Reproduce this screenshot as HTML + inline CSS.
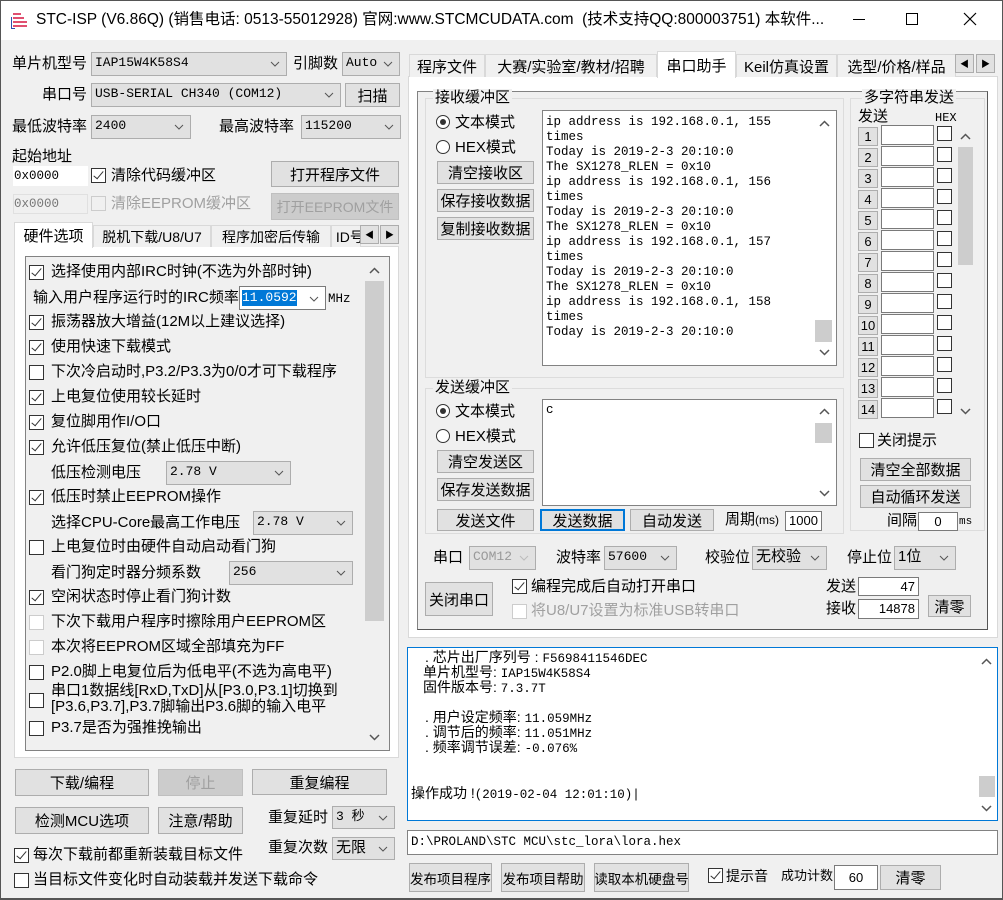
<!DOCTYPE html><html><head><meta charset="utf-8"><style>
*{box-sizing:border-box;margin:0;padding:0}
body{width:1003px;height:900px;background:#f0f0f0;position:relative;overflow:hidden;font-family:"Liberation Sans","Noto Sans CJK SC",sans-serif;font-size:14px;color:#000}
.a{position:absolute;white-space:nowrap}
.t{position:absolute;white-space:nowrap;line-height:18px;height:18px}
.b{position:absolute;background:#e1e1e1;border:1px solid #adadad;display:flex;align-items:center;justify-content:center;white-space:nowrap}
.d{color:#a0a0a0;background:#ccc;border-color:#bfbfbf}
.c{position:absolute;background:#e1e1e1;border:1px solid #adadad;padding-left:3px;line-height:20px;white-space:nowrap;font-family:"Liberation Mono","Noto Sans CJK SC",monospace;font-size:13px}
.c svg{position:absolute;right:6px;top:8px}
.e{position:absolute;background:#fff;border:1px solid #7a7a7a;white-space:nowrap}
.k{position:absolute;width:15px;height:15px;border:1px solid #333;background:#fff}
.k.x::after{content:"";position:absolute;left:4px;top:0px;width:4px;height:9px;border:solid #333;border-width:0 1.5px 1.5px 0;transform:rotate(40deg)}
.kd{border-color:#ccc}
.r{position:absolute;width:14px;height:14px;border:1px solid #333;border-radius:50%;background:#fff}
.r.x::after{content:"";position:absolute;left:3px;top:3px;width:6px;height:6px;border-radius:50%;background:#333}
.tab{position:absolute;border:1px solid #d9d9d9;border-bottom:none;background:#f0f0f0;display:flex;align-items:center;justify-content:center;white-space:nowrap}
.g{position:absolute;border:1px solid #dcdcdc}
.gl{position:absolute;background:#f0f0f0;padding:0 2px;line-height:18px;white-space:nowrap}
.m{font-family:"Liberation Mono","Noto Sans CJK SC",monospace;font-size:12.5px}
.n{position:absolute;width:20px;height:19px;background:#e1e1e1;border:1px solid #adadad;text-align:center;line-height:18px;font-size:13px}
</style></head><body>
<!-- title bar -->
<div class="a" style="left:0;top:0;width:1003px;height:40px;background:#fff;border:1px solid #555;border-bottom:none"></div>
<svg class="a" style="left:11px;top:11px" width="20" height="18"><path d="M2 3h8M2 7h11M2 11h14M2 15h14" stroke="#e05070" stroke-width="2"/><path d="M0 6v12h4" stroke="#3050b0" stroke-width="2" fill="none"/></svg>
<div class="t" style="left:36px;top:10px;font-size:15.5px;line-height:20px">STC-ISP (V6.86Q) (销售电话: 0513-55012928) 官网:www.STCMCUDATA.com&nbsp; (技术支持QQ:800003751) 本软件...</div>
<div class="a" style="left:853px;top:19px;width:12px;height:1px;background:#000"></div>
<div class="a" style="left:906px;top:13px;width:12px;height:12px;border:1px solid #000"></div>
<svg class="a" style="left:963px;top:12px" width="14" height="14"><path d="M1 1l12 12M13 1L1 13" stroke="#000" stroke-width="1.2"/></svg>
<div class="a" style="left:0;top:40px;width:1px;height:860px;background:#555"></div>
<div class="a" style="left:1002px;top:40px;width:1px;height:860px;background:#555"></div>
<div class="a" style="left:0;top:898px;width:1003px;height:2px;background:#555"></div>

<!-- LEFT -->
<div class="t" style="left:12px;top:55px;font-size:15px">单片机型号</div>
<div class="c" style="left:91px;top:52px;width:196px;height:24px">IAP15W4K58S4<svg width="10" height="6"><path d="M1 1l4 4 4-4" stroke="#555" fill="none"/></svg></div>
<div class="t" style="left:293px;top:55px;font-size:15px">引脚数</div>
<div class="c" style="left:342px;top:52px;width:58px;height:24px">Auto<svg width="10" height="6"><path d="M1 1l4 4 4-4" stroke="#555" fill="none"/></svg></div>
<div class="t" style="left:42px;top:86px;font-size:15px">串口号</div>
<div class="c" style="left:91px;top:83px;width:250px;height:24px">USB-SERIAL CH340 (COM12)<svg width="10" height="6"><path d="M1 1l4 4 4-4" stroke="#555" fill="none"/></svg></div>
<div class="b" style="left:345px;top:83px;width:55px;height:24px;font-size:15px">扫描</div>
<div class="t" style="left:12px;top:118px;font-size:15px">最低波特率</div>
<div class="c" style="left:91px;top:115px;width:100px;height:24px">2400<svg width="10" height="6"><path d="M1 1l4 4 4-4" stroke="#555" fill="none"/></svg></div>
<div class="t" style="left:219px;top:118px;font-size:15px">最高波特率</div>
<div class="c" style="left:301px;top:115px;width:100px;height:24px">115200<svg width="10" height="6"><path d="M1 1l4 4 4-4" stroke="#555" fill="none"/></svg></div>
<div class="t" style="left:12px;top:148px;font-size:15px">起始地址</div>
<div class="e m" style="left:13px;top:166px;width:75px;height:20px;border:none;padding-left:1px;line-height:20px">0x0000</div>
<div class="k x" style="left:91px;top:168px"></div>
<div class="t" style="left:111px;top:167px;font-size:15px">清除代码缓冲区</div>
<div class="b" style="left:271px;top:161px;width:128px;height:26px;font-size:15px">打开程序文件</div>
<div class="a m" style="left:13px;top:194px;width:75px;height:20px;background:#f0f0f0;border:1px solid #e0e0e0;color:#777;line-height:18px">0x0000</div>
<div class="k kd" style="left:91px;top:196px;background:#f0f0f0"></div>
<div class="t" style="left:111px;top:195px;font-size:15px;color:#a0a0a0">清除EEPROM缓冲区</div>
<div class="b d" style="left:271px;top:193px;width:128px;height:27px;font-size:14px">打开EEPROM文件</div>
<!-- left tabs -->
<div class="a" style="left:14px;top:246px;width:385px;height:512px;background:#fff;border:1px solid #d9d9d9"></div>
<div class="tab" style="left:14px;top:222px;width:79px;height:26px;background:#fff;font-size:15px">硬件选项</div>
<div class="tab" style="left:93px;top:225px;width:118px;height:22px;font-size:14px">脱机下载/U8/U7</div>
<div class="tab" style="left:211px;top:225px;width:120px;height:22px;font-size:14px">程序加密后传输</div>
<div class="tab" style="left:331px;top:225px;width:30px;height:22px;justify-content:flex-start;overflow:hidden;font-size:14px">&nbsp;ID号</div>
<div class="b" style="left:360px;top:225px;width:19px;height:19px;font-size:9px">◀</div>
<div class="b" style="left:380px;top:225px;width:19px;height:19px;font-size:9px">▶</div>
<div class="a" style="left:25px;top:256px;width:365px;height:495px;background:#f0f0f0;border:1px solid #828282"></div>
<div class="a" style="left:365px;top:281px;width:19px;height:340px;background:#cdcdcd"></div>
<svg class="a" style="left:369px;top:267px" width="11" height="7"><path d="M1 6l4.5-4.5 4.5 4.5" stroke="#555" fill="none" stroke-width="1.5"/></svg>
<svg class="a" style="left:369px;top:734px" width="11" height="7"><path d="M1 1l4.5 4.5 4.5-4.5" stroke="#555" fill="none" stroke-width="1.5"/></svg>
<div class="k x" style="left:29px;top:265px"></div><div class="t" style="left:51px;top:263px;font-size:15px">选择使用内部IRC时钟(不选为外部时钟)</div>
<div class="t" style="left:33px;top:289px;font-size:15px">输入用户程序运行时的IRC频率</div>
<div class="e" style="left:239px;top:286px;width:87px;height:24px"><span class="m" style="position:absolute;left:2px;top:3px;background:#0078d7;color:#fff;font-size:13px;line-height:16px">11.0592</span><svg style="position:absolute;right:6px;top:9px" width="10" height="6"><path d="M1 1l4 4 4-4" stroke="#555" fill="none"/></svg></div>
<div class="t m" style="left:328px;top:290px">MHz</div>
<div class="k x" style="left:29px;top:315px"></div><div class="t" style="left:51px;top:313px;font-size:15px">振荡器放大增益(12M以上建议选择)</div>
<div class="k x" style="left:29px;top:340px"></div><div class="t" style="left:51px;top:338px;font-size:15px">使用快速下载模式</div>
<div class="k" style="left:29px;top:365px"></div><div class="t" style="left:51px;top:363px;font-size:15px">下次冷启动时,P3.2/P3.3为0/0才可下载程序</div>
<div class="k x" style="left:29px;top:390px"></div><div class="t" style="left:51px;top:388px;font-size:15px">上电复位使用较长延时</div>
<div class="k x" style="left:29px;top:415px"></div><div class="t" style="left:51px;top:413px;font-size:15px">复位脚用作I/O口</div>
<div class="k x" style="left:29px;top:440px"></div><div class="t" style="left:51px;top:438px;font-size:15px">允许低压复位(禁止低压中断)</div>
<div class="t" style="left:51px;top:464px;font-size:15px">低压检测电压</div>
<div class="c" style="left:166px;top:461px;width:125px;height:24px">2.78 V<svg width="10" height="6"><path d="M1 1l4 4 4-4" stroke="#555" fill="none"/></svg></div>
<div class="k x" style="left:29px;top:490px"></div><div class="t" style="left:51px;top:488px;font-size:15px">低压时禁止EEPROM操作</div>
<div class="t" style="left:51px;top:514px;font-size:15px">选择CPU-Core最高工作电压</div>
<div class="c" style="left:253px;top:511px;width:100px;height:24px">2.78 V<svg width="10" height="6"><path d="M1 1l4 4 4-4" stroke="#555" fill="none"/></svg></div>
<div class="k" style="left:29px;top:540px"></div><div class="t" style="left:51px;top:538px;font-size:15px">上电复位时由硬件自动启动看门狗</div>
<div class="t" style="left:51px;top:564px;font-size:15px">看门狗定时器分频系数</div>
<div class="c" style="left:229px;top:561px;width:124px;height:24px">256<svg width="10" height="6"><path d="M1 1l4 4 4-4" stroke="#555" fill="none"/></svg></div>
<div class="k x" style="left:29px;top:590px"></div><div class="t" style="left:51px;top:588px;font-size:15px">空闲状态时停止看门狗计数</div>
<div class="k kd" style="left:29px;top:615px"></div><div class="t" style="left:51px;top:613px;font-size:15px">下次下载用户程序时擦除用户EEPROM区</div>
<div class="k kd" style="left:29px;top:640px"></div><div class="t" style="left:51px;top:638px;font-size:15px">本次将EEPROM区域全部填充为FF</div>
<div class="k" style="left:29px;top:665px"></div><div class="t" style="left:51px;top:663px;font-size:15px">P2.0脚上电复位后为低电平(不选为高电平)</div>
<div class="k" style="left:29px;top:693px"></div><div class="t" style="left:51px;top:683px;font-size:15px;line-height:16px">串口1数据线[RxD,TxD]从[P3.0,P3.1]切换到</div><div class="t" style="left:51px;top:699px;font-size:15px;line-height:16px">[P3.6,P3.7],P3.7脚输出P3.6脚的输入电平</div>
<div class="k" style="left:29px;top:721px"></div><div class="t" style="left:51px;top:719px;font-size:15px">P3.7是否为强推挽输出</div>
<!-- left bottom -->
<div class="b" style="left:15px;top:769px;width:134px;height:27px;font-size:15px">下载/编程</div>
<div class="b d" style="left:158px;top:769px;width:85px;height:27px;font-size:15px">停止</div>
<div class="b" style="left:252px;top:769px;width:135px;height:26px;font-size:15px">重复编程</div>
<div class="b" style="left:15px;top:807px;width:134px;height:27px;font-size:15px">检测MCU选项</div>
<div class="b" style="left:158px;top:807px;width:85px;height:27px;font-size:15px">注意/帮助</div>
<div class="t" style="left:268px;top:809px;font-size:15px">重复延时</div>
<div class="c" style="left:332px;top:806px;width:63px;height:23px">3 秒<svg width="10" height="6"><path d="M1 1l4 4 4-4" stroke="#555" fill="none"/></svg></div>
<div class="t" style="left:268px;top:839px;font-size:15px">重复次数</div>
<div class="c" style="left:332px;top:837px;width:63px;height:23px;font-family:'Liberation Sans','Noto Sans CJK SC',sans-serif;font-size:15px">无限<svg width="10" height="6"><path d="M1 1l4 4 4-4" stroke="#555" fill="none"/></svg></div>
<div class="k x" style="left:14px;top:848px"></div><div class="t" style="left:33px;top:846px;font-size:15px">每次下载前都重新装载目标文件</div>
<div class="k" style="left:14px;top:873px"></div><div class="t" style="left:33px;top:871px;font-size:15px">当目标文件变化时自动装载并发送下载命令</div>

<!-- RIGHT -->
<div class="a" style="left:408px;top:76px;width:590px;height:562px;background:#fff;border:1px solid #d9d9d9"></div>
<div class="tab" style="left:409px;top:54px;width:76px;height:23px;font-size:15px">程序文件</div>
<div class="tab" style="left:485px;top:54px;width:172px;height:23px;font-size:15px">大赛/实验室/教材/招聘</div>
<div class="tab" style="left:657px;top:51px;width:79px;height:27px;background:#fff;font-size:15px">串口助手</div>
<div class="tab" style="left:736px;top:54px;width:101px;height:23px;font-size:15px">Keil仿真设置</div>
<div class="tab" style="left:837px;top:54px;width:119px;height:23px;font-size:15px;overflow:hidden">选型/价格/样品</div>
<div class="b" style="left:955px;top:54px;width:19px;height:19px;font-size:9px">◀</div>
<div class="b" style="left:976px;top:54px;width:19px;height:19px;font-size:9px">▶</div>
<div class="a" style="left:417px;top:91px;width:571px;height:539px;background:#f0f0f0;border:1px solid #828282;border-right-color:#555;border-bottom-color:#555"></div>
<!-- receive group -->
<div class="g" style="left:425px;top:98px;width:419px;height:280px"></div>
<div class="gl" style="left:433px;top:89px;font-size:15px">接收缓冲区</div>
<div class="r x" style="left:436px;top:115px"></div><div class="t" style="left:455px;top:114px;font-size:15px">文本模式</div>
<div class="r" style="left:436px;top:140px"></div><div class="t" style="left:455px;top:139px;font-size:15px">HEX模式</div>
<div class="b" style="left:437px;top:161px;width:97px;height:23px;font-size:15px">清空接收区</div>
<div class="b" style="left:437px;top:189px;width:97px;height:23px;font-size:15px">保存接收数据</div>
<div class="b" style="left:437px;top:217px;width:97px;height:23px;font-size:15px">复制接收数据</div>
<div class="e m" style="left:542px;top:110px;width:295px;height:256px;border-color:#828282;padding:4px 0 0 3px;line-height:15px">ip address is 192.168.0.1, 155<br>times<br>Today is 2019-2-3 20:10:0<br>The SX1278_RLEN = 0x10<br>ip address is 192.168.0.1, 156<br>times<br>Today is 2019-2-3 20:10:0<br>The SX1278_RLEN = 0x10<br>ip address is 192.168.0.1, 157<br>times<br>Today is 2019-2-3 20:10:0<br>The SX1278_RLEN = 0x10<br>ip address is 192.168.0.1, 158<br>times<br>Today is 2019-2-3 20:10:0</div>
<div class="a" style="left:815px;top:320px;width:17px;height:22px;background:#cdcdcd"></div>
<svg class="a" style="left:819px;top:120px" width="11" height="7"><path d="M1 6l4.5-4.5 4.5 4.5" stroke="#555" fill="none" stroke-width="1.5"/></svg>
<svg class="a" style="left:819px;top:349px" width="11" height="7"><path d="M1 1l4.5 4.5 4.5-4.5" stroke="#555" fill="none" stroke-width="1.5"/></svg>
<!-- multi-string -->
<div class="g" style="left:850px;top:98px;width:135px;height:433px"></div>
<div class="gl" style="left:862px;top:89px;font-size:15px">多字符串发送</div>
<div class="t" style="left:858px;top:108px;font-size:15px">发送</div>
<div class="t m" style="left:935px;top:109px;font-size:12px">HEX</div>
<div class="n" style="left:858px;top:127px">1</div><div class="e" style="left:881px;top:125px;width:53px;height:20px"></div><div class="k" style="left:937px;top:126px"></div>
<div class="n" style="left:858px;top:148px">2</div><div class="e" style="left:881px;top:146px;width:53px;height:20px"></div><div class="k" style="left:937px;top:147px"></div>
<div class="n" style="left:858px;top:169px">3</div><div class="e" style="left:881px;top:167px;width:53px;height:20px"></div><div class="k" style="left:937px;top:168px"></div>
<div class="n" style="left:858px;top:190px">4</div><div class="e" style="left:881px;top:188px;width:53px;height:20px"></div><div class="k" style="left:937px;top:189px"></div>
<div class="n" style="left:858px;top:211px">5</div><div class="e" style="left:881px;top:209px;width:53px;height:20px"></div><div class="k" style="left:937px;top:210px"></div>
<div class="n" style="left:858px;top:232px">6</div><div class="e" style="left:881px;top:230px;width:53px;height:20px"></div><div class="k" style="left:937px;top:231px"></div>
<div class="n" style="left:858px;top:253px">7</div><div class="e" style="left:881px;top:251px;width:53px;height:20px"></div><div class="k" style="left:937px;top:252px"></div>
<div class="n" style="left:858px;top:274px">8</div><div class="e" style="left:881px;top:272px;width:53px;height:20px"></div><div class="k" style="left:937px;top:273px"></div>
<div class="n" style="left:858px;top:295px">9</div><div class="e" style="left:881px;top:293px;width:53px;height:20px"></div><div class="k" style="left:937px;top:294px"></div>
<div class="n" style="left:858px;top:316px">10</div><div class="e" style="left:881px;top:314px;width:53px;height:20px"></div><div class="k" style="left:937px;top:315px"></div>
<div class="n" style="left:858px;top:337px">11</div><div class="e" style="left:881px;top:335px;width:53px;height:20px"></div><div class="k" style="left:937px;top:336px"></div>
<div class="n" style="left:858px;top:358px">12</div><div class="e" style="left:881px;top:356px;width:53px;height:20px"></div><div class="k" style="left:937px;top:357px"></div>
<div class="n" style="left:858px;top:379px">13</div><div class="e" style="left:881px;top:377px;width:53px;height:20px"></div><div class="k" style="left:937px;top:378px"></div>
<div class="n" style="left:858px;top:400px">14</div><div class="e" style="left:881px;top:398px;width:53px;height:20px"></div><div class="k" style="left:937px;top:399px"></div>
<div class="a" style="left:956px;top:127px;width:18px;height:293px;background:#f0f0f0"></div>
<div class="a" style="left:958px;top:147px;width:15px;height:118px;background:#cdcdcd"></div>
<svg class="a" style="left:960px;top:133px" width="11" height="7"><path d="M1 6l4.5-4.5 4.5 4.5" stroke="#555" fill="none" stroke-width="1.5"/></svg>
<svg class="a" style="left:960px;top:408px" width="11" height="7"><path d="M1 1l4.5 4.5 4.5-4.5" stroke="#555" fill="none" stroke-width="1.5"/></svg>
<div class="k" style="left:859px;top:433px"></div><div class="t" style="left:877px;top:432px;font-size:15px">关闭提示</div>
<div class="b" style="left:860px;top:458px;width:111px;height:23px;font-size:15px">清空全部数据</div>
<div class="b" style="left:860px;top:485px;width:111px;height:23px;font-size:15px">自动循环发送</div>
<div class="t" style="left:887px;top:512px;font-size:15px">间隔</div>
<div class="e" style="left:918px;top:512px;width:40px;height:19px;text-align:center;font-size:13px;line-height:17px">0</div>
<div class="t m" style="left:959px;top:513px;font-size:11px">ms</div>
<!-- send group -->
<div class="g" style="left:425px;top:388px;width:419px;height:146px"></div>
<div class="gl" style="left:433px;top:379px;font-size:15px">发送缓冲区</div>
<div class="r x" style="left:436px;top:404px"></div><div class="t" style="left:455px;top:403px;font-size:15px">文本模式</div>
<div class="r" style="left:436px;top:429px"></div><div class="t" style="left:455px;top:428px;font-size:15px">HEX模式</div>
<div class="b" style="left:437px;top:450px;width:97px;height:23px;font-size:15px">清空发送区</div>
<div class="b" style="left:437px;top:478px;width:97px;height:23px;font-size:15px">保存发送数据</div>
<div class="e m" style="left:542px;top:399px;width:295px;height:107px;border-color:#828282;padding:3px 0 0 3px">c</div>
<div class="a" style="left:815px;top:423px;width:17px;height:20px;background:#cdcdcd"></div>
<svg class="a" style="left:819px;top:408px" width="11" height="7"><path d="M1 6l4.5-4.5 4.5 4.5" stroke="#555" fill="none" stroke-width="1.5"/></svg>
<svg class="a" style="left:819px;top:490px" width="11" height="7"><path d="M1 1l4.5 4.5 4.5-4.5" stroke="#555" fill="none" stroke-width="1.5"/></svg>
<div class="b" style="left:437px;top:509px;width:97px;height:22px;font-size:15px">发送文件</div>
<div class="b" style="left:540px;top:509px;width:85px;height:22px;font-size:15px;border:2px solid #0078d7">发送数据</div>
<div class="b" style="left:630px;top:509px;width:84px;height:22px;font-size:15px">自动发送</div>
<div class="t" style="left:725px;top:511px;font-size:15px">周期<span style="font-size:12px">(ms)</span></div>
<div class="e" style="left:785px;top:511px;width:37px;height:20px;font-size:13px;line-height:18px;text-align:center">1000</div>
<!-- port row -->
<div class="t" style="left:433px;top:549px;font-size:15px">串口</div>
<div class="c d" style="left:469px;top:546px;width:67px;height:24px;color:#999">COM12<svg width="10" height="6"><path d="M1 1l4 4 4-4" stroke="#bbb" fill="none"/></svg></div>
<div class="t" style="left:556px;top:549px;font-size:15px">波特率</div>
<div class="c" style="left:604px;top:546px;width:73px;height:24px">57600<svg width="10" height="6"><path d="M1 1l4 4 4-4" stroke="#555" fill="none"/></svg></div>
<div class="t" style="left:705px;top:549px;font-size:15px">校验位</div>
<div class="c" style="left:752px;top:546px;width:75px;height:24px;font-family:'Liberation Sans','Noto Sans CJK SC',sans-serif;font-size:15px">无校验<svg width="10" height="6"><path d="M1 1l4 4 4-4" stroke="#555" fill="none"/></svg></div>
<div class="t" style="left:847px;top:549px;font-size:15px">停止位</div>
<div class="c" style="left:894px;top:546px;width:62px;height:24px;font-family:'Liberation Sans','Noto Sans CJK SC',sans-serif;font-size:15px">1位<svg width="10" height="6"><path d="M1 1l4 4 4-4" stroke="#555" fill="none"/></svg></div>
<div class="b" style="left:425px;top:582px;width:68px;height:34px;font-size:15px">关闭串口</div>
<div class="k x" style="left:512px;top:579px"></div><div class="t" style="left:531px;top:578px;font-size:15px">编程完成后自动打开串口</div>
<div class="k kd" style="left:512px;top:604px"></div><div class="t" style="left:531px;top:602px;font-size:15px;color:#a0a0a0">将U8/U7设置为标准USB转串口</div>
<div class="t" style="left:826px;top:578px;font-size:15px">发送</div>
<div class="e" style="left:858px;top:577px;width:61px;height:19px;text-align:right;padding-right:3px;font-size:13px;line-height:17px">47</div>
<div class="t" style="left:826px;top:600px;font-size:15px">接收</div>
<div class="e" style="left:858px;top:599px;width:61px;height:20px;text-align:right;padding-right:3px;font-size:13px;line-height:18px">14878</div>
<div class="b" style="left:928px;top:595px;width:43px;height:22px;font-size:15px">清零</div>
<!-- log -->
<div class="e" style="left:407px;top:647px;width:591px;height:174px;border:1px solid #0078d7"></div>
<div class="a" style="left:979px;top:776px;width:16px;height:21px;background:#cdcdcd"></div>
<svg class="a" style="left:981px;top:658px" width="11" height="7"><path d="M1 6l4.5-4.5 4.5 4.5" stroke="#555" fill="none" stroke-width="1.5"/></svg>
<svg class="a" style="left:981px;top:805px" width="11" height="7"><path d="M1 1l4.5 4.5 4.5-4.5" stroke="#555" fill="none" stroke-width="1.5"/></svg>
<div class="t" style="left:425px;top:650px;font-size:14px;line-height:15px">. 芯片出厂序列号 : <span class="m">F5698411546DEC</span></div>
<div class="t" style="left:423px;top:665px;font-size:14px;line-height:15px">单片机型号: <span class="m">IAP15W4K58S4</span></div>
<div class="t" style="left:423px;top:680px;font-size:14px;line-height:15px">固件版本号: <span class="m">7.3.7T</span></div>
<div class="t" style="left:425px;top:710px;font-size:14px;line-height:15px">. 用户设定频率: <span class="m">11.059MHz</span></div>
<div class="t" style="left:425px;top:725px;font-size:14px;line-height:15px">. 调节后的频率: <span class="m">11.051MHz</span></div>
<div class="t" style="left:425px;top:740px;font-size:14px;line-height:15px">. 频率调节误差: <span class="m">-0.076%</span></div>
<div class="t" style="left:411px;top:784px;font-size:14px">操作成功 !<span class="m">(2019-02-04 12:01:10)|</span></div>
<div class="e m" style="left:407px;top:830px;width:591px;height:25px;border-color:#828282;padding-left:3px;line-height:23px">D:\PROLAND\STC MCU\stc_lora\lora.hex</div>
<div class="b" style="left:409px;top:863px;width:83px;height:29px;font-size:13.5px">发布项目程序</div>
<div class="b" style="left:501px;top:863px;width:84px;height:29px;font-size:13.5px">发布项目帮助</div>
<div class="b" style="left:594px;top:863px;width:95px;height:29px;font-size:13.5px">读取本机硬盘号</div>
<div class="k x" style="left:708px;top:868px"></div><div class="t" style="left:726px;top:867px;font-size:14px">提示音</div>
<div class="t" style="left:781px;top:867px;font-size:13px">成功计数</div>
<div class="e" style="left:834px;top:865px;width:44px;height:25px;text-align:center;font-size:13px;line-height:23px">60</div>
<div class="b" style="left:880px;top:865px;width:61px;height:25px;font-size:15px">清零</div>
</body></html>
